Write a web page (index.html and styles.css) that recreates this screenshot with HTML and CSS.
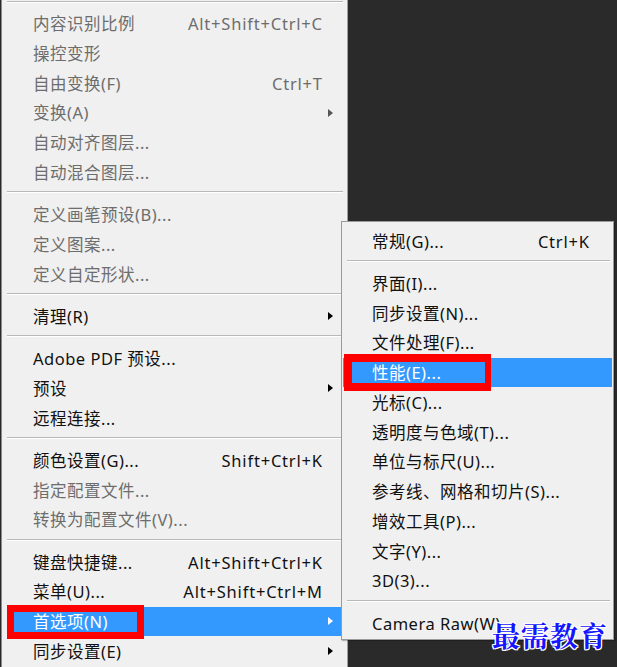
FILE: index.html
```html
<!DOCTYPE html>
<html lang="zh-CN">
<head>
<meta charset="utf-8">
<title>首选项菜单</title>
<link rel="stylesheet" href="styles.css">
</head>
<body>
<div class="screen">
  <div class="menu main">
    <div class="sep top"></div>
    <div class="item dis"><span class="label">内容识别比例</span><span class="key">Alt+Shift+Ctrl+C</span><span class="arr"></span></div>
    <div class="item dis"><span class="label">操控变形</span><span class="key"></span><span class="arr"></span></div>
    <div class="item dis"><span class="label">自由变换(F)</span><span class="key">Ctrl+T</span><span class="arr"></span></div>
    <div class="item dis"><span class="label">变换(A)</span><span class="key"></span><span class="arr"><i class="tri"></i></span></div>
    <div class="item dis"><span class="label">自动对齐图层...</span><span class="key"></span><span class="arr"></span></div>
    <div class="item dis"><span class="label">自动混合图层...</span><span class="key"></span><span class="arr"></span></div>
    <div class="sep"></div>
    <div class="item dis"><span class="label">定义画笔预设(B)...</span><span class="key"></span><span class="arr"></span></div>
    <div class="item dis"><span class="label">定义图案...</span><span class="key"></span><span class="arr"></span></div>
    <div class="item dis"><span class="label">定义自定形状...</span><span class="key"></span><span class="arr"></span></div>
    <div class="sep"></div>
    <div class="item"><span class="label">清理(R)</span><span class="key"></span><span class="arr"><i class="tri"></i></span></div>
    <div class="sep"></div>
    <div class="item"><span class="label">Adobe PDF 预设...</span><span class="key"></span><span class="arr"></span></div>
    <div class="item"><span class="label">预设</span><span class="key"></span><span class="arr"><i class="tri"></i></span></div>
    <div class="item"><span class="label">远程连接...</span><span class="key"></span><span class="arr"></span></div>
    <div class="sep"></div>
    <div class="item"><span class="label">颜色设置(G)...</span><span class="key">Shift+Ctrl+K</span><span class="arr"></span></div>
    <div class="item dis"><span class="label">指定配置文件...</span><span class="key"></span><span class="arr"></span></div>
    <div class="item dis"><span class="label">转换为配置文件(V)...</span><span class="key"></span><span class="arr"></span></div>
    <div class="sep"></div>
    <div class="item"><span class="label">键盘快捷键...</span><span class="key">Alt+Shift+Ctrl+K</span><span class="arr"></span></div>
    <div class="item"><span class="label">菜单(U)...</span><span class="key">Alt+Shift+Ctrl+M</span><span class="arr"></span></div>
    <div class="item hl"><span class="label">首选项(N)</span><span class="key"></span><span class="arr"><i class="tri"></i></span><span class="mark mark-main"></span></div>
    <div class="item"><span class="label">同步设置(E)</span><span class="key"></span><span class="arr"><i class="tri"></i></span></div>
  </div>

  <div class="menu sub">
    <div class="item"><span class="label">常规(G)...</span><span class="key">Ctrl+K</span></div>
    <div class="sep"></div>
    <div class="item"><span class="label">界面(I)...</span><span class="key"></span></div>
    <div class="item"><span class="label">同步设置(N)...</span><span class="key"></span></div>
    <div class="item"><span class="label">文件处理(F)...</span><span class="key"></span></div>
    <div class="item hl"><span class="label">性能(E)...</span><span class="key"></span><span class="mark mark-sub"></span></div>
    <div class="item"><span class="label">光标(C)...</span><span class="key"></span></div>
    <div class="item"><span class="label">透明度与色域(T)...</span><span class="key"></span></div>
    <div class="item"><span class="label">单位与标尺(U)...</span><span class="key"></span></div>
    <div class="item"><span class="label">参考线、网格和切片(S)...</span><span class="key"></span></div>
    <div class="item"><span class="label">增效工具(P)...</span><span class="key"></span></div>
    <div class="item"><span class="label">文字(Y)...</span><span class="key"></span></div>
    <div class="item"><span class="label">3D(3)...</span><span class="key"></span></div>
    <div class="sep"></div>
    <div class="item"><span class="label">Camera Raw(W)...</span><span class="key"></span></div>
  </div>

  <div class="watermark">最需教育</div>
</div>
</body>
</html>
```

FILE: styles.css
```css
html, body {
  margin: 0;
  padding: 0;
  background: #2a2a2a;
}

.screen {
  position: relative;
  width: 617px;
  height: 667px;
  overflow: hidden;
  background: #2a2a2a;
  font-family: "Noto Sans", "Noto Sans CJK SC", sans-serif;
  font-size: 16.5px;
  color: #111;
}

.menu {
  background: #f0f0f0;
  display: flex;
  flex-direction: column;
}

.main {
  margin-left: 1px;
  width: 347px;
  box-sizing: border-box;
  border-left: 1px solid #8a8a8a;
  border-right: 1px solid #a0a0a0;
  min-height: 667px;
}

.sub {
  position: absolute;
  left: 341px;
  top: 221px;
  width: 273px;
  box-sizing: border-box;
  border: 1px solid #9a9a9a;
  padding: 4px 0 1px;
  box-shadow: 1px 1px 1px rgba(0, 0, 0, 0.25);
}

.sep {
  height: 12.5px;
  box-sizing: border-box;
  padding-top: 4px;
  margin: 0 4px 0 5px;
}

.sep::before {
  content: "";
  display: block;
  height: 1px;
  background: #b8b8b8;
  border-bottom: 1px solid #ffffff;
}

.sep.top {
  height: 8.5px;
  padding-top: 1px;
}

.sub .sep {
  margin: 0 3px 0 5px;
}

.item {
  position: relative;
  height: 29.75px;
  box-sizing: border-box;
  padding-top: 2px;
  display: grid;
  align-items: center;
  white-space: nowrap;
  line-height: 1;
}

.main .item {
  grid-template-columns: 1fr auto 21px;
  margin: 0 4px 0 5px;
  padding-left: 26px;
}

.sub .item {
  grid-template-columns: 1fr auto;
  padding-left: 29px;
  padding-right: 23px;
  margin: 0 1px;
}

.label {
  letter-spacing: 0.5px;
}

.key {
  text-align: right;
  letter-spacing: 0.8px;
  margin-right: -0.8px;
}

.arr {
  display: flex;
  align-items: center;
  padding-left: 6px;
  margin-top: -2px;
}

.tri {
  display: block;
  width: 0;
  height: 0;
  border-left: 5px solid #000;
  border-top: 4.5px solid transparent;
  border-bottom: 4.5px solid transparent;
}

.dis {
  color: #6d6d6d;
}

.dis .tri {
  border-left-color: #555;
}

.hl {
  background: #3399ff;
  color: #ffffff;
}

.hl .tri {
  border-left-color: #ffffff;
}

.mark {
  position: absolute;
  box-sizing: border-box;
  border: 7.5px solid #ff0000;
}

.mark-main {
  left: 0;
  top: -1.5px;
  width: 137px;
  height: 34px;
}

.mark-sub {
  left: 1px;
  top: -3.5px;
  width: 147px;
  height: 37px;
  border-width: 8px 6.5px 8px 8.5px;
}

.watermark {
  position: absolute;
  left: 492px;
  top: 617px;
  font-family: "Noto Serif CJK SC", "Noto Sans CJK SC", serif;
  font-weight: bold;
  font-size: 28px;
  letter-spacing: 1px;
  line-height: 36px;
  color: #1414ff;
  text-shadow: 1px 0 #fff, -1px 0 #fff, 0 1px #fff, 0 -1px #fff, 1px 1px #fff, -1px -1px #fff, 1px -1px #fff, -1px 1px #fff;
}
```
